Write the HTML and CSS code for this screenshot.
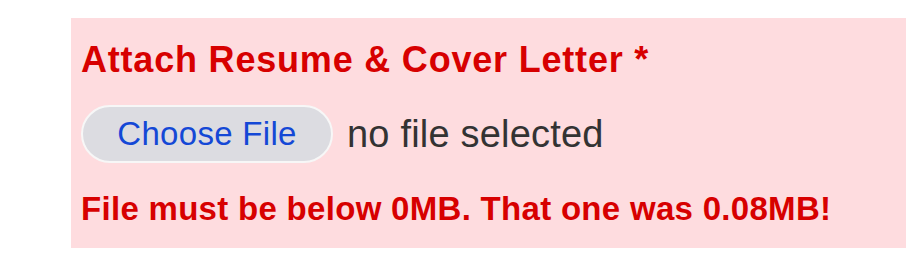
FILE: index.html
```html
<!DOCTYPE html>
<html>
<head>
<meta charset="utf-8">
<link rel="stylesheet" href="styles.css">
</head>
<body>
<div class="field">
  <div class="title">Attach Resume &amp; Cover Letter *</div>
  <div class="file-row">
    <span class="choose">Choose File</span>
    <span class="status">no file selected</span>
  </div>
  <div class="error">File must be below 0MB. That one was 0.08MB!</div>
</div>
</body>
</html>
```
FILE: styles.css
```css
html, body {
  margin: 0;
  padding: 0;
  background: #ffffff;
}
body {
  font-family: "Liberation Sans", Arial, Helvetica, sans-serif;
  width: 906px;
  height: 280px;
  overflow: hidden;
}
.field {
  margin: 18px 0 0 71px;
  background: #fedcdf;
  padding: 22px 10px 20px 10px;
  display: flex;
  flex-direction: column;
}
.title {
  color: #d70000;
  font-weight: bold;
  font-size: 36px;
  line-height: 40px;
  letter-spacing: 0.8px;
}
.file-row {
  margin-top: 25px;
  display: flex;
  align-items: center;
  gap: 14px;
}
.choose {
  box-sizing: border-box;
  width: 252px;
  height: 58px;
  border: 2px solid #f7f7f7;
  border-radius: 29px;
  background: #dcdce1;
  color: #1448d6;
  font-size: 33px;
  letter-spacing: 0.3px;
  display: flex;
  align-items: center;
  justify-content: center;
}
.status {
  color: #333333;
  font-size: 38px;
  letter-spacing: 0.2px;
}
.error {
  margin-top: 27px;
  color: #d70000;
  font-weight: bold;
  font-size: 33px;
  line-height: 38px;
  letter-spacing: 0.3px;
}
```
